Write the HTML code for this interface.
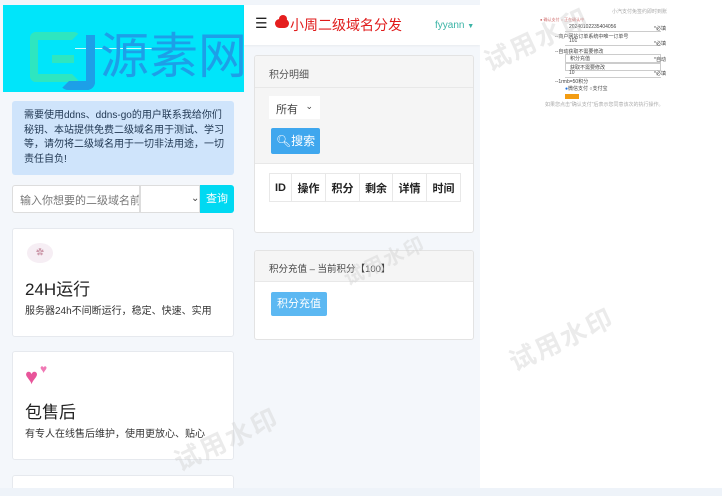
<!DOCTYPE html>
<html><head><meta charset="utf-8"><style>
*{box-sizing:border-box;margin:0;padding:0}
body{width:722px;height:496px;overflow:hidden;background:#f4f7fb;font-family:"Liberation Sans","Noto Sans CJK SC",sans-serif;position:relative;color:#222}
.abs{position:absolute}
.card{position:absolute;left:12px;width:222px;background:#fff;border:1px solid #e6e9ee;border-radius:3px}
.wm{position:absolute;color:rgba(210,210,210,.45);font-size:26px;transform:rotate(-25deg);font-weight:bold;letter-spacing:2px}
</style></head><body>
<div class="abs" style="left:0;top:0;width:722px;height:5px;background:#f1f5fa"></div>
<!-- cyan logo box -->
<div class="abs" style="left:3px;top:5px;width:241px;height:87px;background:#00e5fa"></div>
<div class="abs" style="left:75px;top:48px;width:98px;height:1px;background:#fff;opacity:.8"></div>
<div class="abs" style="left:30px;top:32px;width:50px;height:50px;border:8px solid #2ee6c0;border-right-color:transparent;border-radius:6px"></div>
<div class="abs" style="left:52px;top:55px;width:22px;height:8px;background:#2ee6c0"></div>
<div class="abs" style="left:60px;top:35px;width:35px;height:55px;border:9px solid #1d9fe8;border-top:none;border-left-color:transparent;border-radius:0 0 8px 8px"></div>
<div class="abs" style="left:100px;top:26px;font-size:49px;color:#1d9fe8;line-height:62px;white-space:nowrap">源素网</div>
<!-- alert -->
<div class="abs" style="left:12px;top:101px;width:222px;height:74px;background:#cfe4fb;border-radius:3px;padding:8px 0 0 12px;font-size:10px;line-height:14.5px;color:#1e3550;white-space:nowrap;overflow:hidden">需要使用ddns、ddns-go的用户联系我给你们<br>秘钥、本站提供免费二级域名用于测试、学习<br>等，请勿将二级域名用于一切非法用途，一切<br>责任自负!</div>
<!-- input group -->
<div class="abs" style="left:12px;top:185px;width:128px;height:28px;background:#fff;border:1px solid #ddd;border-radius:3px 0 0 3px;font-size:11px;color:#777;padding:6px 7px;white-space:nowrap;overflow:hidden">输入你想要的二级域名前缀</div>
<div class="abs" style="left:140px;top:185px;width:60px;height:28px;background:#fff;border:1px solid #ddd;font-size:10px;color:#444;padding:7px 0 0 50px">⌄</div>
<div class="abs" style="left:200px;top:185px;width:34px;height:28px;background:#00d9f2;color:#fff;font-size:11px;text-align:center;line-height:28px;border-radius:0 3px 3px 0">查询</div>
<!-- cards -->
<div class="card" style="top:228px;height:109px">
<div class="abs" style="left:14px;top:14px;width:26px;height:20px;border-radius:50%;background:#f6eef4;color:#c9a;font-size:8px;text-align:center;line-height:20px">✿</div>
<div class="abs" style="left:12px;top:46px;font-size:17px;color:#222">24H运行</div>
<div class="abs" style="left:12px;top:73px;font-size:10px;color:#333">服务器24h不间断运行，稳定、快速、实用</div>
</div>
<div class="card" style="top:351px;height:109px">
<div class="abs" style="left:12px;top:12px;font-size:22px;color:#e8559a;line-height:26px">♥</div>
<div class="abs" style="left:27px;top:10px;font-size:12px;color:#f07ab5">♥</div>
<div class="abs" style="left:12px;top:46px;font-size:17px;color:#222">包售后</div>
<div class="abs" style="left:12px;top:73px;font-size:10px;color:#333">有专人在线售后维护，使用更放心、贴心</div>
</div>
<div class="card" style="top:475px;height:20px;border-bottom:none"></div>
<div class="abs" style="left:0;top:488px;width:722px;height:8px;background:#eef3f9"></div>
<!-- header -->
<div class="abs" style="left:244px;top:5px;width:236px;height:40px;background:#fff;box-shadow:0 1px 2px rgba(0,0,0,.05)"></div>
<div class="abs" style="left:255px;top:15px;font-size:14px;color:#222">☰</div>
<div class="abs" style="left:275px;top:19px;width:14px;height:9px;background:#e51e1e;border-radius:5px"></div>
<div class="abs" style="left:279px;top:15px;width:8px;height:8px;background:#e51e1e;border-radius:50%"></div>
<div class="abs" style="left:290px;top:15px;font-size:14px;color:#e01b1b">小周二级域名分发</div>
<div class="abs" style="left:435px;top:20px;font-size:10px;color:#3bb4a6">fyyann <span style="font-size:7px;color:#3bb4a6">▼</span></div>
<!-- panel 1 -->
<div class="abs" style="left:254px;top:55px;width:220px;height:178px;background:#fff;border:1px solid #e3e3e3;border-radius:3px;overflow:hidden">
<div style="height:32px;background:#f5f5f5;border-bottom:1px solid #e8e8e8;font-size:10px;color:#555;padding:10px 14px">积分明细</div>
<div style="height:76px;background:#f5f5f5;border-bottom:1px solid #e8e8e8;position:relative">
<div class="abs" style="left:14px;top:8px;width:51px;height:23px;background:#fff;font-size:11px;color:#444;padding:5px 7px">所有 <span style="float:right;font-size:9px">⌄</span></div>
<div class="abs" style="left:16px;top:40px;width:49px;height:26px;background:#3fa7ee;border-radius:2px;color:#fff;font-size:12px;line-height:26px;text-align:center">🔍︎搜索</div>
</div>
<table style="position:absolute;left:14px;top:117px;border-collapse:collapse;font-size:11px;font-weight:bold;color:#222">
<tr style="height:28px"><td style="border:1px solid #e8e8e8;width:22px;text-align:center">ID</td><td style="border:1px solid #e8e8e8;width:34px;text-align:center">操作</td><td style="border:1px solid #e8e8e8;width:34px;text-align:center">积分</td><td style="border:1px solid #e8e8e8;width:33px;text-align:center">剩余</td><td style="border:1px solid #e8e8e8;width:34px;text-align:center">详情</td><td style="border:1px solid #e8e8e8;width:34px;text-align:center">时间</td></tr>
</table>
</div>
<!-- panel 2 -->
<div class="abs" style="left:254px;top:250px;width:220px;height:90px;background:#fff;border:1px solid #e3e3e3;border-radius:3px;overflow:hidden">
<div style="height:31px;background:#f5f5f5;border-bottom:1px solid #e8e8e8;font-size:9.5px;color:#444;padding:10px 14px">积分充值 – 当前积分【100】</div>
<div class="abs" style="left:16px;top:41px;width:56px;height:24px;background:#5cb8f2;border-radius:2px;color:#fff;font-size:11px;line-height:24px;text-align:center">积分充值</div>
</div>
<!-- right faint form -->
<div class="abs" style="left:480px;top:0;width:242px;height:488px;background:#fff"></div>
<div class="abs" style="left:612px;top:8px;font-size:5px;color:#aaa">小汽支付免签约即时到账</div>
<div class="abs" style="left:540px;top:17px;font-size:4px;color:#c66">● 确认支付 ○ 正在确认中</div>
<div class="abs" style="left:565px;top:24px;width:96px;height:8px;border-bottom:1px solid #ccc;font-size:5px;color:#444;padding-left:4px">20240102235404056</div>
<div class="abs" style="left:654px;top:25px;font-size:5px;color:#444">*必填</div>
<div class="abs" style="left:555px;top:33px;font-size:5px;color:#444">--商户网站订单系统中唯一订单号</div>
<div class="abs" style="left:565px;top:38px;width:96px;height:8px;border-bottom:1px solid #ccc;font-size:5px;color:#444;padding-left:4px">101</div>
<div class="abs" style="left:654px;top:40px;font-size:5px;color:#444">*必填</div>
<div class="abs" style="left:555px;top:48px;font-size:5px;color:#444">--自动获取不需要修改</div>
<div class="abs" style="left:565px;top:54px;width:96px;height:9px;border:1px solid #ccc;font-size:5px;color:#444;padding-left:4px">积分充值</div>
<div class="abs" style="left:654px;top:56px;font-size:5px;color:#444">*自动</div>
<div class="abs" style="left:565px;top:63px;width:96px;height:8px;border:1px solid #ccc;font-size:5px;color:#444;padding-left:4px">获取不需要修改</div>
<div class="abs" style="left:565px;top:70px;width:96px;height:8px;border-bottom:1px solid #ccc;font-size:5px;color:#444;padding-left:4px">10</div>
<div class="abs" style="left:654px;top:70px;font-size:5px;color:#444">*必填</div>
<div class="abs" style="left:555px;top:78px;font-size:5px;color:#444">--1rmb=50积分</div>
<div class="abs" style="left:565px;top:85px;font-size:5px;color:#444"><span style="color:#1a6fe0">●</span>微信支付 ○支付宝</div>
<div class="abs" style="left:565px;top:94px;width:14px;height:5px;background:#f39c12"></div>
<div class="abs" style="left:545px;top:101px;font-size:5px;color:#aaa">如果您点击"确认支付"后表示您同意该次的执行操作。</div>
<!-- watermarks -->
<div class="wm" style="left:480px;top:20px">试用水印</div>
<div class="wm" style="left:505px;top:320px">试用水印</div>
<div class="wm" style="left:170px;top:420px">试用水印</div>
<div class="wm" style="left:340px;top:245px;font-size:20px">试用水印</div>
</body></html>
